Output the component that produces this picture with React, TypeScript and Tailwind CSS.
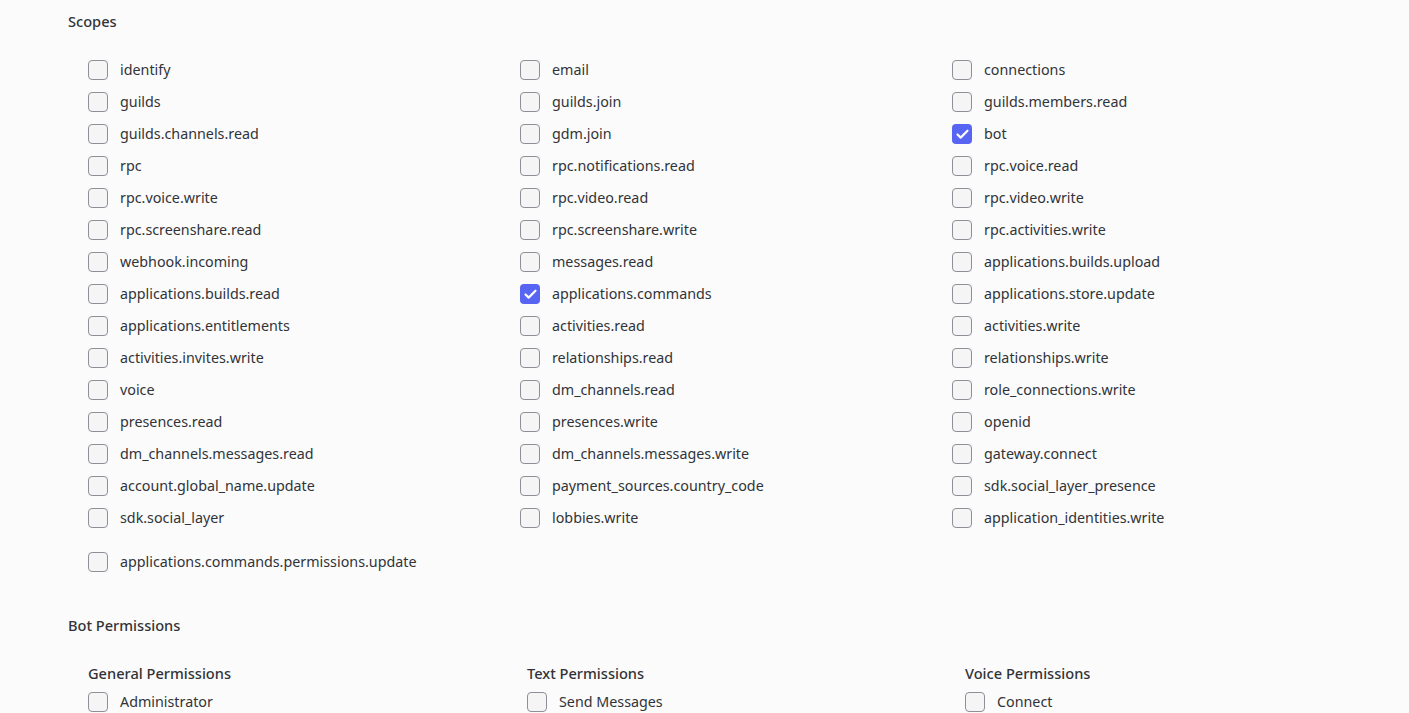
import { Check } from 'lucide-react';

const scopes: [string, boolean][] = [
    ['identify', false],
    ['email', false],
    ['connections', false],
    ['guilds', false],
    ['guilds.join', false],
    ['guilds.members.read', false],
    ['guilds.channels.read', false],
    ['gdm.join', false],
    ['bot', true],
    ['rpc', false],
    ['rpc.notifications.read', false],
    ['rpc.voice.read', false],
    ['rpc.voice.write', false],
    ['rpc.video.read', false],
    ['rpc.video.write', false],
    ['rpc.screenshare.read', false],
    ['rpc.screenshare.write', false],
    ['rpc.activities.write', false],
    ['webhook.incoming', false],
    ['messages.read', false],
    ['applications.builds.upload', false],
    ['applications.builds.read', false],
    ['applications.commands', true],
    ['applications.store.update', false],
    ['applications.entitlements', false],
    ['activities.read', false],
    ['activities.write', false],
    ['activities.invites.write', false],
    ['relationships.read', false],
    ['relationships.write', false],
    ['voice', false],
    ['dm_channels.read', false],
    ['role_connections.write', false],
    ['presences.read', false],
    ['presences.write', false],
    ['openid', false],
    ['dm_channels.messages.read', false],
    ['dm_channels.messages.write', false],
    ['gateway.connect', false],
    ['account.global_name.update', false],
    ['payment_sources.country_code', false],
    ['sdk.social_layer_presence', false],
    ['sdk.social_layer', false],
    ['lobbies.write', false],
    ['application_identities.write', false],
];

const permGroups = [
    { title: 'General Permissions', first: 'Administrator' },
    { title: 'Text Permissions', first: 'Send Messages' },
    { title: 'Voice Permissions', first: 'Connect' },
];

function Box({ checked }: { checked: boolean }) {
    return checked ? (
        <span className="w-5 h-5 shrink-0 rounded-[4px] bg-[#5865f2] flex items-center justify-center">
            <Check className="w-[15px] h-[15px] text-white" strokeWidth={3.5} />
        </span>
    ) : (
        <span className="w-5 h-5 shrink-0 rounded-[4px] border border-[#8d9098] bg-[#f5f5f6]" />
    );
}

function Row({ label, checked }: { label: string; checked: boolean }) {
    return (
        <label className="h-8 flex items-center gap-3 cursor-pointer">
            <Box checked={checked} />
            <span className="text-[14.3px] leading-5 pb-px text-[#313338]">{label}</span>
        </label>
    );
}

export default function App() {
    return (
        <div
            className="min-h-screen bg-[#fbfbfb] px-[68px] pt-[11px]"
            style={{ fontFamily: '"Noto Sans", sans-serif' }}
        >
            <h2 className="h-5 leading-5 text-[14.6px] font-medium text-[#313338]">
                Scopes
            </h2>
            <div className="pl-5 mt-[23px] grid grid-cols-[432px_432px_1fr]">
                {scopes.map(([label, checked]) => (
                    <Row key={label} label={label} checked={checked} />
                ))}
            </div>
            <div className="pl-5 mt-3">
                <Row label="applications.commands.permissions.update" checked={false} />
            </div>
            <h2 className="mt-[37px] h-5 leading-5 text-[14.6px] font-medium text-[#313338]">
                Bot Permissions
            </h2>
            <div className="pl-5 mt-7 grid grid-cols-[439px_438px_1fr]">
                {permGroups.map((g) => (
                    <div key={g.title}>
                        <h3 className="h-5 leading-5 text-[14.6px] font-medium text-[#313338]">
                            {g.title}
                        </h3>
                        <div className="mt-[3px]">
                            <Row label={g.first} checked={false} />
                        </div>
                    </div>
                ))}
            </div>
        </div>
    );
}
